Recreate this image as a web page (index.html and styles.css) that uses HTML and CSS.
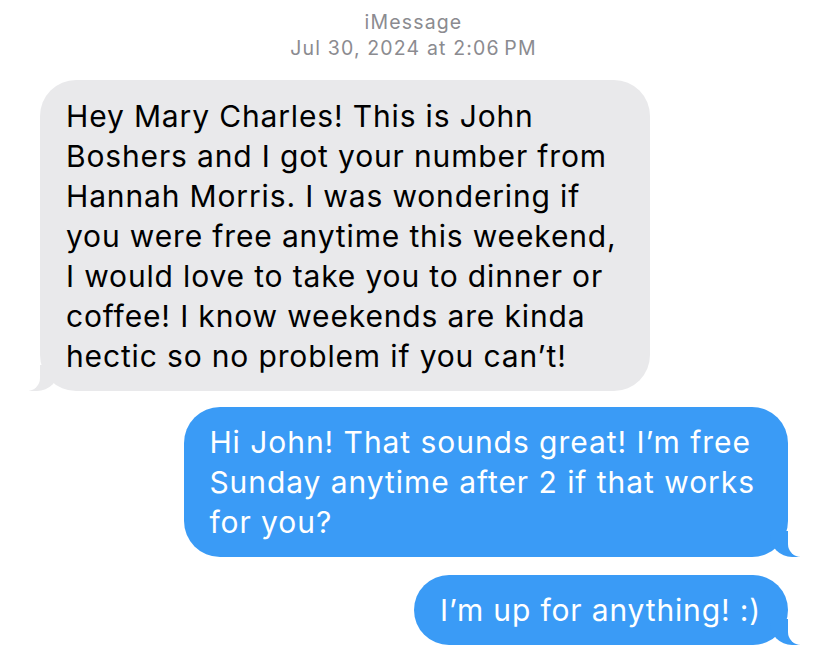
FILE: index.html
```html
<!DOCTYPE html>
<html>
<head>
<meta charset="utf-8">
<link rel="stylesheet" href="styles.css">
</head>
<body>
<div class="thread">
  <header class="meta">
    <div class="service">iMessage</div>
    <div class="stamp">Jul 30, 2024 at 2:06&#8239;PM</div>
  </header>
  <div class="row in">
    <div class="bubble received">Hey Mary Charles! This is John<br>Boshers and I got your number from<br>Hannah Morris. I was wondering if<br>you were free anytime this weekend,<br>I would love to take you to dinner or<br>coffee! I know weekends are kinda<br>hectic so no problem if you can’t!</div>
  </div>
  <div class="row out first">
    <div class="bubble sent">Hi John! That sounds great! I’m free<br>Sunday anytime after 2 if that works<br>for you?</div>
  </div>
  <div class="row out">
    <div class="bubble sent short">I’m up for anything! :)</div>
  </div>
</div>
</body>
</html>
```
FILE: styles.css
```css
html, body {
  margin: 0;
  padding: 0;
  background: #ffffff;
}
.thread {
  width: 827px;
  height: 660px;
  overflow: hidden;
  font-family: "Inter", "Roboto", "Liberation Sans", sans-serif;
  display: flex;
  flex-direction: column;
}
.meta {
  text-align: center;
  color: #8b8b90;
  font-size: 19.5px;
  letter-spacing: 1.15px;
  line-height: 26px;
  padding-top: 9px;
  margin-bottom: 19px;
}
.row {
  display: flex;
  padding: 0 39px 0 40px;
}
.row.in { justify-content: flex-start; }
.row.out { justify-content: flex-end; }
.row.first { margin-top: 16px; }
.row.out + .row.out { margin-top: 18px; }
.bubble {
  position: relative;
  font-size: 30px;
  letter-spacing: 0.85px;
  line-height: 40px;
  border-radius: 36px;
  white-space: nowrap;
}
.received {
  background: #e9e9eb;
  color: #000000;
  padding: 16px 33px 15px 26px;
}
.sent {
  background: #3a9bf6;
  color: #ffffff;
  letter-spacing: 0.95px;
  padding: 15px 33px 15px 25px;
}
.sent.short {
  padding: 15px 27px 15px 26px;
  letter-spacing: 0.85px;
}
.received::before,
.received::after,
.sent::before,
.sent::after {
  content: "";
  position: absolute;
  bottom: 0;
  height: 26px;
}
.received::before {
  left: -11px;
  width: 30px;
  background: #e9e9eb;
  border-bottom-right-radius: 22px;
  z-index: 0;
}
.received::after {
  left: -14px;
  width: 14px;
  background: #ffffff;
  border-bottom-right-radius: 13px;
  z-index: 1;
}
.sent::before {
  right: -12px;
  width: 30px;
  background: #3a9bf6;
  border-bottom-left-radius: 22px;
  z-index: 0;
}
.sent::after {
  right: -15px;
  width: 15px;
  background: #ffffff;
  border-bottom-left-radius: 13px;
  z-index: 1;
}
```
